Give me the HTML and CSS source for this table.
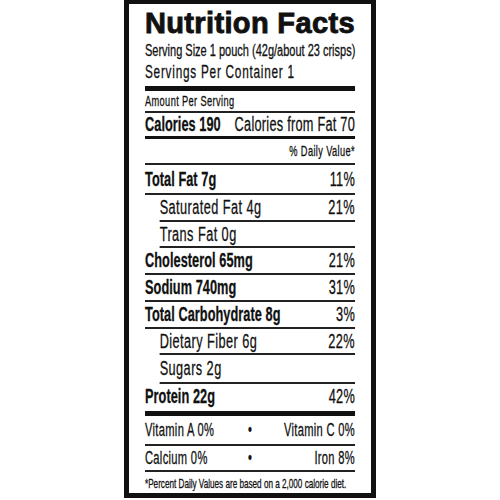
FILE: index.html
```html
<!DOCTYPE html>
<html lang="en">
<head>
  <meta charset="UTF-8">
  <title>Nutrition Facts</title>
  <link rel="stylesheet" href="styles.css">
</head>
<body>
  <div class="label">
    <h1 class="title">Nutrition Facts</h1>

    <div class="facts">
      <div class="serving">Serving Size 1 pouch (42g/about 23 crisps)</div>
      <div class="serving per">Servings Per Container 1</div>
      <div class="bar thick"></div>

      <div class="small amount">Amount Per Serving</div>
      <div class="row calories">
        <b>Calories 190</b>
        <span>Calories from Fat 70</span>
      </div>
      <div class="bar medium"></div>
      <div class="small dv">% Daily Value*</div>

      <div class="row first">
        <b>Total Fat 7g</b>
        <span>11%</span>
      </div>
      <div class="row sub">
        <span>Saturated Fat 4g</span>
        <span>21%</span>
      </div>
      <div class="row sub">
        <span>Trans Fat 0g</span>
      </div>
      <div class="row">
        <b>Cholesterol 65mg</b>
        <span>21%</span>
      </div>
      <div class="row">
        <b>Sodium 740mg</b>
        <span>31%</span>
      </div>
      <div class="row">
        <b>Total Carbohydrate 8g</b>
        <span>3%</span>
      </div>
      <div class="row sub">
        <span>Dietary Fiber 6g</span>
        <span>22%</span>
      </div>
      <div class="row sub sugars">
        <span>Sugars 2g</span>
      </div>
      <div class="row protein">
        <b>Protein 22g</b>
        <span>42%</span>
      </div>
      <div class="bar thick"></div>

      <div class="vitamins first">
        <span>Vitamin A 0%</span>
        <span class="dot">&bull;</span>
        <span class="right">Vitamin C 0%</span>
      </div>
      <div class="vitamins">
        <span>Calcium 0%</span>
        <span class="dot">&bull;</span>
        <span class="right">Iron 8%</span>
      </div>

      <div class="note">*Percent Daily Values are based on a 2,000 calorie diet.</div>
    </div>
  </div>
</body>
</html>
```

FILE: styles.css
```css
body {
  margin: 0;
  background-color: #fff;
  color: #111;
  font-family: "Liberation Sans", Arial, sans-serif;
}
.label {
  width: 210px;
  height: 489px;
  margin: 0 auto;
  padding: 0 16px;
  border: 5px solid #111;
  border-top-width: 4px;
  overflow: hidden;
}
.title {
  margin: 0;
  padding-top: 2px;
  font-size: 29px;
  font-weight: bold;
  line-height: 34px;
  letter-spacing: 0.35px;
  -webkit-text-stroke: 0.9px #111;
  white-space: nowrap;
}

/* the label type is very condensed, so squeeze the whole block */
.facts {
  width: 330px;
  transform: scaleX(0.6364);
  transform-origin: 0 0;
  -webkit-text-stroke: 0.3px #111;
}
.serving {
  font-size: 17.3px;
  line-height: 21px;
  white-space: nowrap;
}
.serving.per {
  font-size: 18.5px;
  letter-spacing: 1.2px;
}
.bar {
  background-color: #111;
}
.bar.thick {
  height: 5px;
  margin-top: 4px;
}
.bar.medium {
  height: 3px;
}
.small {
  font-size: 14.5px;
  line-height: 20px;
  letter-spacing: 0.6px;
}
.amount {
  border-bottom: 2px solid #222;
}
.dv {
  line-height: 24px;
  text-align: right;
  border-bottom: 2px solid #222;
}
.row {
  display: flex;
  justify-content: space-between;
  font-size: 20px;
  line-height: 24.7px;
  letter-spacing: 0.4px;
  border-bottom: 2px solid #222;
  white-space: nowrap;
}
.row b {
  font-weight: bold;
  letter-spacing: 0.1px;
}
.row.first {
  line-height: 28px;
}
.row.calories {
  line-height: 23px;
  border-bottom: none;
}
.row.sub {
  margin-left: 23px;
  letter-spacing: 0.7px;
}
.row.sugars {
  line-height: 26.5px;
}
.row.protein {
  line-height: 25px;
  border-bottom: none;
}
.protein + .bar.thick {
  margin-top: 2px;
}
.vitamins {
  display: grid;
  grid-template-columns: 1fr auto 1fr;
  font-size: 17.5px;
  line-height: 28px;
  letter-spacing: 0.5px;
  border-bottom: 2px solid #222;
  white-space: nowrap;
}
.vitamins + .vitamins {
  line-height: 24px;
}
.vitamins .right {
  text-align: right;
}
.note {
  font-size: 12.8px;
  line-height: 23px;
  white-space: nowrap;
}
```
